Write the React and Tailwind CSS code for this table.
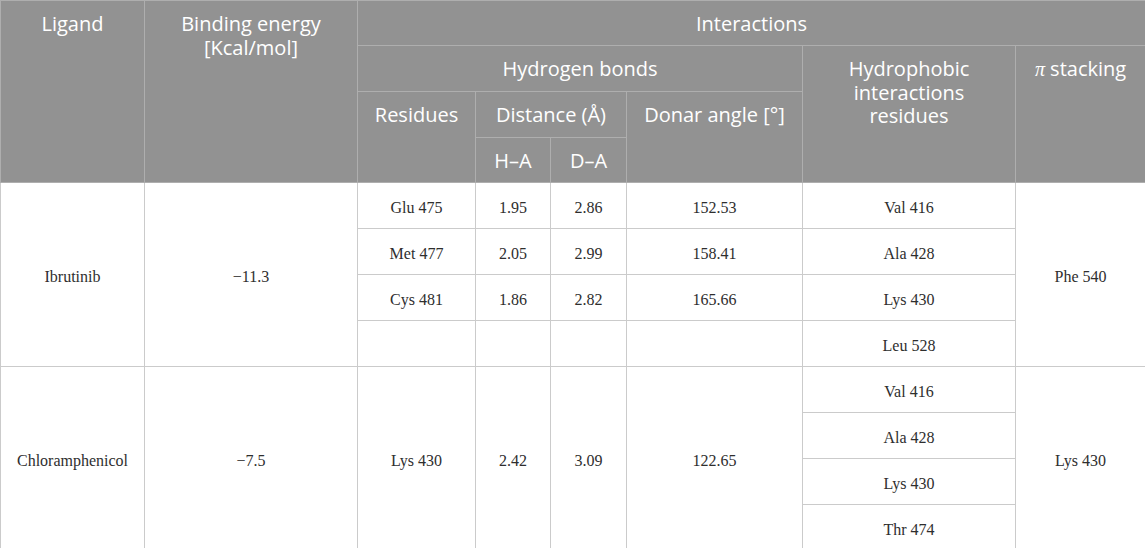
const ibrutinibBonds = [
  ["Glu 475", "1.95", "2.86", "152.53"],
  ["Met 477", "2.05", "2.99", "158.41"],
  ["Cys 481", "1.86", "2.82", "165.66"],
  ["", "", "", ""],
];

const ibrutinibHydro = ["Val 416", "Ala 428", "Lys 430", "Leu 528"];
const chloroHydro = ["Val 416", "Ala 428", "Lys 430", "Thr 474"];

const th =
  "border border-[#aeaeae] align-top pt-[11px] px-2 font-normal text-white text-[20px] leading-[23.5px]";
const td =
  "border border-[#cbcbcb] text-center align-middle pt-1 text-[16px] text-[#2e2e2e]";

function App() {
  return (
    <div className="w-[1145px] h-[548px] overflow-hidden bg-white">
      <table
        className="table-fixed border-collapse w-[1145px] text-center"
        style={{ fontFamily: '"Liberation Serif", serif' }}
      >
        <colgroup>
          <col className="w-[144px]" />
          <col className="w-[213px]" />
          <col className="w-[118px]" />
          <col className="w-[75px]" />
          <col className="w-[76px]" />
          <col className="w-[176px]" />
          <col className="w-[213px]" />
          <col className="w-[130px]" />
        </colgroup>

        {/* HEADER */}
        <thead
          className="bg-[#929292]"
          style={{ fontFamily: '"Open Sans", sans-serif' }}
        >
          <tr className="h-[45px]">
            <th rowSpan={4} className={th}>Ligand</th>
            <th rowSpan={4} className={th}>
              Binding energy
              <br />
              [Kcal/mol]
            </th>
            <th colSpan={6} className={th}>Interactions</th>
          </tr>
          <tr className="h-[46px]">
            <th colSpan={4} className={th}>Hydrogen bonds</th>
            <th rowSpan={3} className={th}>
              Hydrophobic
              <br />
              interactions
              <br />
              residues
            </th>
            <th rowSpan={3} className={th}>
              <i style={{ fontFamily: '"Liberation Serif", serif' }}>π</i> stacking
            </th>
          </tr>
          <tr className="h-[46px]">
            <th rowSpan={2} className={th}>Residues</th>
            <th colSpan={2} className={th}>Distance (Å)</th>
            <th rowSpan={2} className={th}>Donar angle [°]</th>
          </tr>
          <tr className="h-[45px]">
            <th className={th}>H–A</th>
            <th className={th}>D–A</th>
          </tr>
        </thead>

        {/* BODY */}
        <tbody>
          {ibrutinibBonds.map((row, i) => (
            <tr key={"ib" + i} className="h-[46px]">
              {i === 0 && (
                <>
                  <td rowSpan={4} className={td}>Ibrutinib</td>
                  <td rowSpan={4} className={td}>−11.3</td>
                </>
              )}
              {row.map((v, j) => (
                <td key={j} className={td}>{v}</td>
              ))}
              <td className={td}>{ibrutinibHydro[i]}</td>
              {i === 0 && (
                <td rowSpan={4} className={td}>Phe 540</td>
              )}
            </tr>
          ))}

          {chloroHydro.map((h, i) => (
            <tr key={"ch" + i} className="h-[46px]">
              {i === 0 && (
                <>
                  <td rowSpan={4} className={td}>Chloramphenicol</td>
                  <td rowSpan={4} className={td}>−7.5</td>
                  <td rowSpan={4} className={td}>Lys 430</td>
                  <td rowSpan={4} className={td}>2.42</td>
                  <td rowSpan={4} className={td}>3.09</td>
                  <td rowSpan={4} className={td}>122.65</td>
                </>
              )}
              <td className={td}>{h}</td>
              {i === 0 && (
                <td rowSpan={4} className={td}>Lys 430</td>
              )}
            </tr>
          ))}
        </tbody>
      </table>
    </div>
  );
}

export default App;
